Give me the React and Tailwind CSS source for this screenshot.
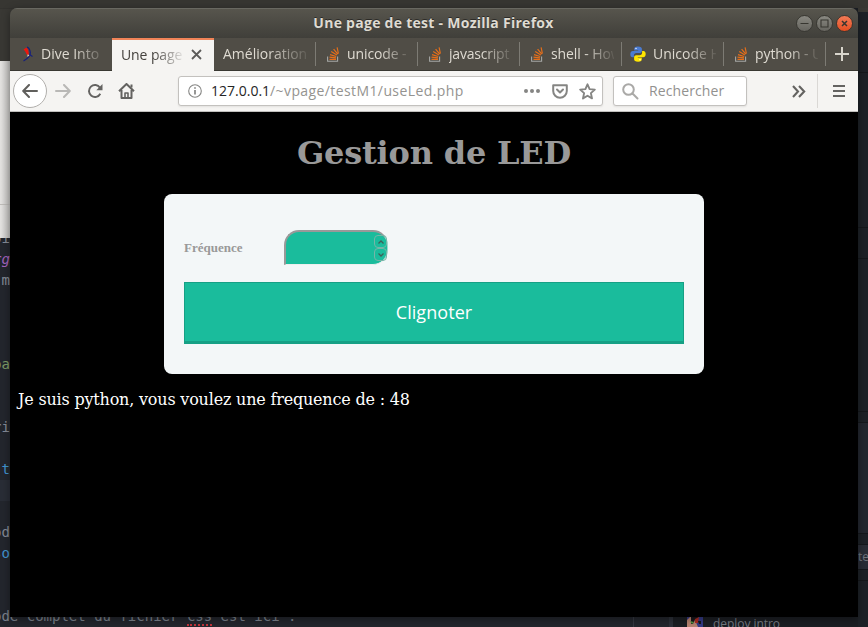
import React from 'react';

const UI = "font-['Open_Sans','Noto_Sans',sans-serif]";

const codeLines = [
  ['oi', 'text-[#858b96]'],
  ['rg', 'italic text-[#a463bd]'],
  [' m', 'text-[#858b96]'],
  ['', ''],
  ['', ''],
  ['', ''],
  ['pa', 'text-[#7f9e68]'],
  ['', ''],
  ['', ''],
  ['ri', 'text-[#858b96]'],
  ['', ''],
  [' t', 'text-[#4295d0]'],
  ['', ''],
  ['', ''],
  ['od', 'text-[#858b96]'],
  ['so', 'text-[#4295d0]'],
  ['', ''],
  ['', ''],
];

function Desktop() {
  return (
    <div className="flex h-full w-full flex-col">
      <div className="h-[8px] shrink-0 bg-[#373632]" />
      <div className="flex min-h-0 flex-1">
        <div className="flex w-[633px] shrink-0 flex-col overflow-hidden bg-[#23262d]">
          <div className="h-[53px] shrink-0 border-t border-[#33322f] bg-[#393834]" />
          <div className="h-[144px] w-[10px] shrink-0 border-b border-[#bdbbb8] bg-gradient-to-r from-[#e4e3e1] to-[#c1c0be]" />
          <div className="h-[33px] w-[10px] shrink-0 bg-gradient-to-r from-[#e4e3e1] to-[#c1c0be]" />
          <div className="-mt-[10px] ml-[-7px] font-['DejaVu_Sans_Mono',monospace] text-[14px] leading-[21px] whitespace-pre [clip-path:inset(10px_0_0_0)]">
            {codeLines.map(([text, color], i) => (
              <div key={i} className={'h-[21px] ' + (i === 12 ? 'bg-[#292d36] ' : '') + color}>{text}</div>
            ))}
            <div className="h-[21px] text-[#7c828c]">
              ode complet du fichier <span className="border-b-2 border-dotted border-[#c2333a]">css</span> est ici :
            </div>
          </div>
        </div>
        <div className="w-[36px] shrink-0 border-l border-[#353841] bg-[#23262d]" />
        <div className="flex w-[189px] shrink-0 items-end border-l-4 border-[#2c3039] bg-[#1b1e23]">
          <div className="flex h-[14px] items-start gap-[10px] overflow-hidden pl-[14px]">
            <svg width="16" height="14" viewBox="0 0 16 14" className="shrink-0">
              <rect width="16" height="14" fill="#343a86" />
              <path d="M0 14V7l3-3 3-4 4 3-2 4 3 7z" fill="#b78370" />
              <path d="M4 4l3-3 1 5-2 5H4z" fill="#17161b" />
              <path d="M6 0h5v5l-1 5-2-1z" fill="#17161b" />
              <path d="M8 6l4-2-1 6H8z" fill="#ae2b20" />
              <path d="M11 8h3v3h-2z" fill="#17161b" />
              <path d="M3 8l4 1-2 2z" fill="#579b42" />
              <path d="M11 4h4V2z" fill="#999bb0" />
            </svg>
            <span className={'text-[12px] leading-[22px] tracking-[-0.05px] text-[#777b83] ' + UI}>deploy intro</span>
          </div>
        </div>
        <div className="flex w-[10px] shrink-0 flex-col overflow-hidden bg-[#1d2127]">
          <div className="h-[4px] shrink-0 bg-[#393834]" />
          <div className="h-[61px] shrink-0 border-b border-[#15181c]" />
          <div className="h-[155px] shrink-0 border-b border-[#15181c]" />
          <div className="h-[31px] shrink-0 border-b border-[#15181c]" />
          <div className="h-[153px] shrink-0 border-b border-[#15181c]" />
          <div className="h-[11px] shrink-0 border-b border-[#15181c]" />
          <div className="h-[111px] shrink-0 border-b border-[#15181c] bg-[#23272f]" />
          <div className="h-[10px] shrink-0" />
          <div className={'h-[26px] shrink-0 border-y border-[#15181c] bg-[#292d36] text-[12px] leading-[23px] text-[#71757e] ' + UI}>te</div>
          <div className="h-[11px] shrink-0 border-b border-[#15181c]" />
        </div>
      </div>
    </div>
  );
}

function StackIcon() {
  return (
    <svg width="13" height="15" viewBox="0 0 13 15" fill="none">
      <path d="M.6 9.5v4.8h10V9.5" stroke="#a5a7a5" strokeWidth="1.1" />
      <g stroke="#e46e1a" strokeWidth="1.2">
        <path d="M2.5 12.4h6.5M2.5 10.1l6.5.7M3 7.6l6.2 1.9M4.2 4.6l5.7 3.5M6.6 2.1l4.2 5.1M10.1.4l1.3 6.2" />
      </g>
    </svg>
  );
}

function PythonIcon() {
  return (
    <svg width="16" height="16" viewBox="0 0 16 16">
      <path d="M7.9.5C5 .5 4.2 1.5 4.2 3v1.5h4V5H2.8C1.1 5 .3 6.4.3 8.2s.8 3.1 2.2 3.1h1.4V9.4c0-1.5 1-2.4 2.4-2.4h3.6c1.1 0 2-.8 2-2V3c0-1.600-1.200-2.500-4-2.500z" fill="#4b7bd0" />
      <path d="M8.100 15.700c2.900 0 3.700-1 3.700-2.500v-1.500h-4v-.5h5.400c1.700 0 2.500-1.400 2.500-3.200s-.8-3.100-2.200-3.100h-1.400v1.900c0 1.500-1 2.400-2.400 2.400H6.100c-1.100 0-2 .8-2 2v2c0 1.600 1.200 2.500 4 2.500z" fill="#ffe500" />
      <circle cx="6" cy="2.500" r=".7" fill="#fff" />
      <circle cx="10" cy="13.700" r=".7" fill="#fff" />
    </svg>
  );
}

function DiveIcon() {
  return (
    <svg width="12" height="16" viewBox="0 0 12 16">
      <path d="M5 1c2 .8 3 2.500 3.300 5.500C8.500 10 5 13 1.500 15" fill="none" stroke="#17207b" strokeWidth="1.300" />
      <path d="M1.500 3.500L4.500 1.500l1.500 2 1 5-2 .5-2-4z" fill="#ed170e" />
      <path d="M5.500 8.500l2 .5-2 2z" fill="#e9d7c0" />
      <path d="M7.500 8.500l3 2" stroke="#17207b" strokeWidth="1.200" />
    </svg>
  );
}

const FADE = '[mask-image:linear-gradient(to_right,#000_52%,transparent_105%)]';

function Tab({ icon, label, pad, spacing, last }) {
  return (
    <div className={'flex w-[102px] shrink-0 items-center overflow-hidden ' + pad}>
      {icon && <span className="mr-[7px] flex h-4 shrink-0 items-center justify-center">{icon}</span>}
      <span className={'min-w-0 flex-1 overflow-hidden whitespace-nowrap text-[14px] leading-[20px] text-[#dfdbd2] ' + FADE + ' ' + spacing}>{label}</span>
      <span className={'ml-[7px] h-[24px] w-px shrink-0 ' + (last ? 'bg-transparent' : 'bg-[#7d7b74]')} />
    </div>
  );
}

function WindowButton({ kind }) {
  const close = kind === 'close';
  return (
    <span className={'flex h-[17px] w-[17px] items-center justify-center rounded-full border ' + (close ? 'border-[#40352e] bg-gradient-to-b from-[#f37a55] to-[#e34e20]' : 'border-[#393833] bg-gradient-to-b from-[#898881] to-[#66655f]')}>
      <svg width="15" height="15" viewBox="0 0 15 15" className="shrink-0" fill="none" stroke="#373630" strokeWidth="1.100">
        {kind === 'min' && <path d="M3.500 7.500h8" />}
        {kind === 'max' && <path d="M4 4h7v7H4z" />}
        {close && <path d="M5 5l5 5M10 5l-5 5" strokeWidth="1.500" />}
      </svg>
    </span>
  );
}

function TitleBar() {
  return (
    <div className="flex h-[30px] shrink-0 items-center justify-between border-t border-[#696861] bg-gradient-to-b from-[#57554d] to-[#403f3a] pr-[5px] pb-[1px]">
      <span className="w-[57px]" />
      <span className="pl-[4px] text-[14px] font-bold leading-[20px] tracking-[0.27px] text-[#dfdbd2] [text-shadow:0_-1px_0_#2c2b28]">Une page de test - Mozilla Firefox</span>
      <span className="flex gap-[3px]">
        <WindowButton kind="min" />
        <WindowButton kind="max" />
        <WindowButton kind="close" />
      </span>
    </div>
  );
}

function TabBar() {
  return (
    <div className="flex h-[33px] shrink-0 border-b border-[#393832] bg-[#504d46]">
      <Tab icon={<DiveIcon />} label="Dive Into" pad="pl-[12px]" spacing="tracking-[0px]" last />
      <div className="-mb-px flex w-[102px] shrink-0 items-center border-t-2 border-[#f08458] bg-[#f5f4f2] pl-[9px] pr-[12px] pb-[2px]">
        <span className={'min-w-0 flex-1 overflow-hidden whitespace-nowrap text-[14px] leading-[20px] tracking-[-0.1px] text-[#45423e] ' + FADE}>Une page de test</span>
        <svg width="11" height="11" viewBox="0 0 11 11" className="ml-[8px] shrink-0" stroke="#5c5b59" strokeWidth="1.800"><path d="M1 1l9 9M10 1l-9 9" /></svg>
      </div>
      <Tab label="Améliorations" pad="pl-[9px]" spacing="tracking-[0px]" />
      <Tab icon={<StackIcon />} label="unicode - Ho" pad="pl-[11px]" spacing="tracking-[-0.1px]" />
      <Tab icon={<StackIcon />} label="javascript" pad="pl-[11px]" spacing="tracking-[-0.2px]" />
      <Tab icon={<StackIcon />} label="shell - How" pad="pl-[11px]" spacing="tracking-[-0.1px]" />
      <Tab icon={<PythonIcon />} label="Unicode HO" pad="pl-[8px]" spacing="tracking-[0px]" />
      <Tab icon={<StackIcon />} label="python - Us" pad="pl-[11px]" spacing="tracking-[-0.1px]" />
      <div className="flex flex-1 items-center justify-center">
        <svg width="14" height="14" viewBox="0 0 14 14" stroke="#d8d5cc" strokeWidth="2"><path d="M7 0v14M0 7h14" /></svg>
      </div>
    </div>
  );
}

function Toolbar() {
  return (
    <div className="flex h-[41px] shrink-0 items-center border-b border-[#c0bfbd] bg-[#f5f4f2]">
      <span className="ml-[3px] flex h-[34px] w-[34px] items-center justify-center rounded-full border border-[#b1afac] bg-white">
        <svg width="16" height="14" viewBox="0 0 16 14" fill="none" stroke="#605f5c" strokeWidth="2" strokeLinecap="round" strokeLinejoin="round"><path d="M15 7H1.500M7 1L1.200 7 7 13" /></svg>
      </span>
      <svg width="16" height="14" viewBox="0 0 16 14" className="ml-[8px]" fill="none" stroke="#b9b8b6" strokeWidth="2" strokeLinecap="round" strokeLinejoin="round"><path d="M1 7h13.500M9 1l5.800 6L9 13" /></svg>
      <svg width="16" height="16" viewBox="0 0 16 16" className="ml-[16px]" fill="none" stroke="#646361" strokeWidth="2"><path d="M13.300 10.800A6 6 0 1 1 13 4.700" /><path d="M15.500 1v6.200H9.300z" fill="#646361" stroke="none" /></svg>
      <svg width="17" height="16" viewBox="0 0 17 16" className="ml-[15px]" fill="none" stroke="#646361" strokeWidth="2" strokeLinejoin="round"><path d="M1 8.200L8.500 1 16 8.200M3.500 7v8h10V7" /><path d="M7 15v-5h3v5" strokeWidth="1.600" /><path d="M13.500 1.500v3" /></svg>
      <div className="ml-[43px] flex h-[30px] w-[425px] items-center rounded-[3px] border border-[#c3c1be] bg-white pl-[9px] shadow-[0_1px_2px_rgba(0,0,0,0.08)]">
        <svg width="14" height="14" viewBox="0 0 14 14" fill="none" stroke="#858583" strokeWidth="1.100"><circle cx="7" cy="7" r="6.300" /><path d="M7 6v4.500M7 3.300v1.500" strokeWidth="1.700" /></svg>
        <span className="ml-[9px] flex-1 whitespace-nowrap text-[14px] leading-[20px] tracking-[0.4px] text-[#949390]"><span className="tracking-[0px] text-[#252525]">127.0.0.1</span>/~vpage/testM1/useLed.php</span>
        <svg width="16" height="4" viewBox="0 0 16 4" fill="#858583"><circle cx="2" cy="2" r="2" /><circle cx="8" cy="2" r="2" /><circle cx="14" cy="2" r="2" /></svg>
        <svg width="16" height="15" viewBox="0 0 16 15" className="ml-[12px]" fill="none" stroke="#858583" strokeWidth="2" strokeLinejoin="round" strokeLinecap="round"><path d="M1.200 1.200h13.600V7a6.800 6.800 0 0 1-13.600 0z" /><path d="M5 5.500l3 3 3-3" /></svg>
        <svg width="17" height="17" viewBox="0 0 17 17" className="ml-[11px] mr-[6px]" fill="none" stroke="#858583" strokeWidth="1.900" strokeLinejoin="round"><path d="M8.500 1.300l2.100 4.800 5.200.5-3.900 3.500 1.100 5.300-4.500-2.700L4 15.400l1.100-5.300-3.900-3.500 5.200-.5z" /></svg>
      </div>
      <div className="ml-[10px] flex h-[30px] w-[134px] items-center rounded-[3px] border border-[#c3c1be] bg-white pl-[8px] shadow-[0_1px_2px_rgba(0,0,0,0.08)]">
        <svg width="17" height="17" viewBox="0 0 17 17" fill="none" stroke="#aaa9a7" strokeWidth="2"><circle cx="6.500" cy="6.500" r="5.300" /><path d="M10.500 10.500l5 5" strokeLinecap="round" /></svg>
        <span className="ml-[10px] text-[14px] leading-[20px] tracking-[0.1px] text-[#92918f]">Rechercher</span>
      </div>
      <svg width="14" height="13" viewBox="0 0 14 13" className="ml-[45px]" fill="none" stroke="#646361" strokeWidth="2.100"><path d="M1 1l5 5.500-5 5.500M7 1l5.200 5.500L7 12" /></svg>
      <span className="ml-[11px] h-[34px] w-px bg-[#dad8d5]" />
      <svg width="12" height="12" viewBox="0 0 12 12" className="ml-[15px]" fill="#646361"><path d="M0 0h12v2H0zM0 5h12v2H0zM0 10h12v2H0z" /></svg>
    </div>
  );
}

function Spinner({ up }) {
  return (
    <span className="flex h-[13px] w-[13px] items-center justify-center rounded-[4px] border border-[#75b5a7]">
      <svg width="6" height="4" viewBox="0 0 6 4" fill="none" stroke="#3f5f58" strokeWidth="1.300"><path d={up ? 'M.5 3.500L3 1l2.500 2.500' : 'M.5.5L3 3 5.500.5'} /></svg>
    </span>
  );
}

function Page() {
  return (
    <div className="flex flex-1 flex-col bg-black font-['DejaVu_Serif',serif]">
      <h1 className="mt-[22px] text-center text-[32px] font-bold leading-[38px] tracking-[-0.2px] text-[#999999]">Gestion de LED</h1>
      <form className="mx-auto mt-[22px] flex h-[180px] w-[540px] flex-col rounded-[8px] bg-[#f3f7f8] px-[20px] pt-[36px]">
        <div className="flex h-[35px] items-center">
          <label className="w-[100px] font-['Liberation_Serif',serif] text-[13px] font-bold text-[#999999]">Fréquence</label>
          <div className="flex h-[35px] w-[104px] flex-col items-end justify-center rounded-[15px] rounded-bl-none border-2 border-b-[#eeeeee] border-l-[#999999] border-r-[#9fd8cb] border-t-[#999999] bg-[#1abc9c] [border-right-width:1px] [border-bottom-width:1px]">
            <Spinner up />
            <Spinner />
          </div>
        </div>
        <div className={'mt-[17px] flex h-[62px] w-[500px] items-center justify-center border border-b-[3px] border-[#16a085] bg-[#1abc9c] text-[18px] tracking-[0.05px] text-white ' + UI}>Clignoter</div>
      </form>
      <p className="mt-[16px] pl-[8px] text-[16px] leading-[20px] tracking-[-0.19px] text-white">Je suis python, vous voulez une frequence de : 48</p>
    </div>
  );
}

export default function App() {
  return (
    <div className="relative h-[627px] w-[868px] overflow-hidden bg-[#23262d]">
      <Desktop />
      <div className={'absolute left-[10px] top-[8px] flex h-[609px] w-[848px] flex-col overflow-hidden rounded-t-[7px] shadow-[0_2px_8px_rgba(0,0,0,0.4)] ' + UI}>
        <TitleBar />
        <TabBar />
        <Toolbar />
        <Page />
      </div>
    </div>
  );
}
